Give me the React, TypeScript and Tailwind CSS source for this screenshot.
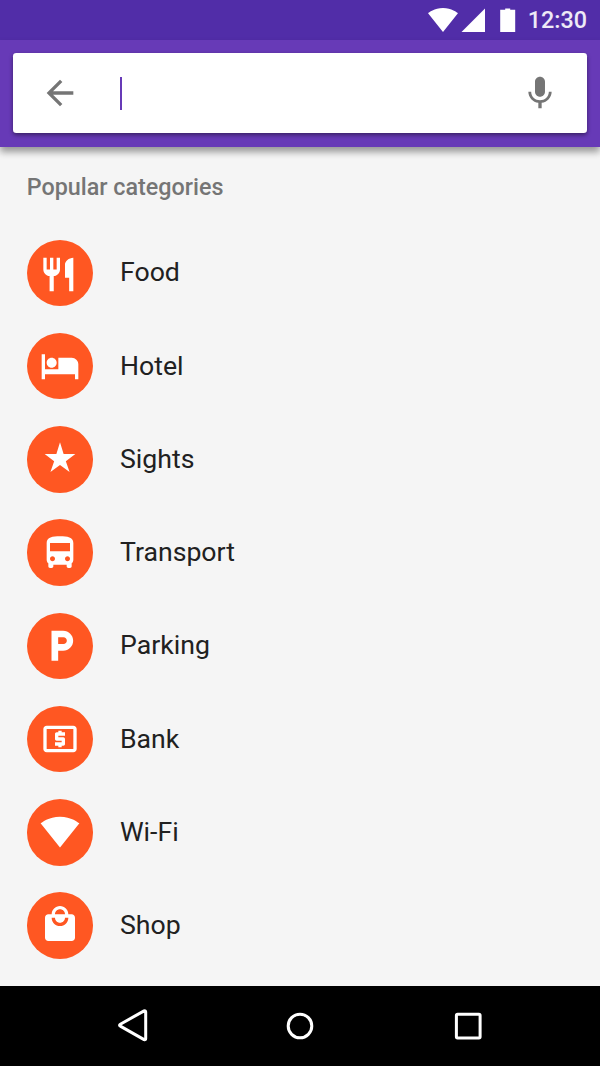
import type { ReactNode } from "react";

type Category = { label: string; icon: ReactNode };

const WIFI =
  "M12.01 21.49L23.64 7c-.45-.34-4.93-4-11.64-4C5.28 3 .81 6.66.36 7l11.63 14.49.01.01.01-.01z";

const categories: Category[] = [
  {
    label: "Food",
    icon: (
      <path
        transform="translate(-1 0.9)"
        d="M11 9H9V2H7v7H5V2H3v7c0 2.12 1.66 3.84 3.75 3.97V22h2.5v-9.03C11.34 12.84 13 11.12 13 9V2h-2v7zm5-3v8h2.5v8H21V2c-2.76 0-5 2.24-5 4z"
      />
    ),
  },
  {
    label: "Hotel",
    icon: (
      <path d="M7 13c1.66 0 3-1.34 3-3S8.66 7 7 7s-3 1.34-3 3 1.34 3 3 3zm12-6h-8v7H3V5H1v15h2v-3h18v3h2v-9c0-2.21-1.79-4-4-4z" />
    ),
  },
  {
    label: "Sights",
    icon: (
      <path d="M12 2L14.17 9.05L21.2 9.05L15.5 13.3L17.75 19.8L12 15.65L6.25 19.8L8.5 13.3L2.8 9.05L9.83 9.05z" />
    ),
  },
  {
    label: "Transport",
    icon: (
      <path d="M4 16c0 .88.39 1.67 1 2.22V20c0 .55.45 1 1 1h1c.55 0 1-.45 1-1v-1h8v1c0 .55.45 1 1 1h1c.55 0 1-.45 1-1v-1.78c.61-.55 1-1.34 1-2.22V6c0-3.5-3.58-4-8-4s-8 .5-8 4v10zm3.5 1c-.83 0-1.5-.67-1.5-1.5S6.67 14 7.5 14s1.5.67 1.5 1.5S8.33 17 7.5 17zm9 0c-.83 0-1.5-.67-1.5-1.5s.67-1.5 1.5-1.5 1.5.67 1.5 1.5-.67 1.5-1.5 1.5zm1.5-6H6V6h12v5z" />
    ),
  },
  {
    label: "Parking",
    icon: (
      <path
        transform="translate(0.9 -0.2)"
        d="M13 3H6v18h4v-6h3c3.31 0 6-2.69 6-6s-2.69-6-6-6zm.2 8H10V7h3.2c1.1 0 2 .9 2 2s-.9 2-2 2z"
      />
    ),
  },
  {
    label: "Bank",
    icon: (
      <path d="M11 17h2v-1h1c.55 0 1-.45 1-1v-3c0-.55-.45-1-1-1h-3v-1h4V8h-2V7h-2v1h-1c-.55 0-1 .45-1 1v3c0 .55.45 1 1 1h3v1H9v2h2v1zm9-13H4c-1.11 0-1.99.89-1.99 2L2 18c0 1.11.89 2 2 2h16c1.11 0 2-.89 2-2V6c0-1.11-.89-2-2-2zm0 14H4V6h16v12z" />
    ),
  },
  { label: "Wi-Fi", icon: <path transform="translate(0 -0.2)" d={WIFI} /> },
  {
    label: "Shop",
    icon: (
      <path
        transform="translate(0 -1)"
        d="M19 6h-2c0-2.76-2.24-5-5-5S7 3.24 7 6H5c-1.1 0-1.99.9-1.99 2L3 20c0 1.1.9 2 2 2h14c1.1 0 2-.9 2-2V8c0-1.1-.9-2-2-2zm-7-3c1.66 0 3 1.34 3 3H9c0-1.66 1.34-3 3-3zm0 10c-2.76 0-5-2.24-5-5h2c0 1.66 1.34 3 3 3s3-1.34 3-3h2c0 2.76-2.24 5-5 5z"
      />
    ),
  },
];

function StatusBar() {
  return (
    <div className="flex h-10 items-center justify-end bg-[#512da8] pr-[13px] text-white">
      <svg className="mr-[3px] h-6 w-[30px]" viewBox="0.3 3 23.4 18.5" fill="currentColor" preserveAspectRatio="none">
        <path d={WIFI} />
      </svg>
      <svg className="mr-[15px] h-6 w-6" viewBox="0 0 24 24" fill="currentColor">
        <path d="M0.5 24L24 0.5V24z" />
      </svg>
      <svg className="mr-3 h-6 w-4" viewBox="0 0 16 24" fill="currentColor">
        <path d="M0.2 1.7h5V0.4h5V1.7h5V24h-15z" />
      </svg>
      <span className="pt-0.5 text-[23.33px] leading-none font-medium text-white/90">12:30</span>
    </div>
  );
}

function SearchHeader() {
  return (
    <header className="relative h-[106.67px] bg-[#673ab7] p-[13.33px] shadow-[0_5px_7px_rgba(0,0,0,0.38)]">
      <div className="flex h-20 items-center rounded-[3.33px] bg-white px-[26.67px] text-[#757575] shadow-[0_2px_4px_rgba(0,0,0,0.45)]">
        <svg className="size-10 shrink-0" viewBox="0 0 24 24" fill="currentColor">
          <path d="M20 11H7.83l5.59-5.59L12 4l-8 8 8 8 1.41-1.41L7.83 13H20v-2z" />
        </svg>
        <div className="ml-10 h-[33px] w-0.5 bg-[#673ab7]" />
        <svg className="ml-auto size-10 shrink-0" viewBox="0 0 24 24" fill="currentColor">
          <path
            transform="translate(0 0.2)"
            d="M12 14c1.66 0 2.99-1.34 2.99-3L15 5c0-1.66-1.34-3-3-3S9 3.34 9 5v6c0 1.66 1.34 3 3 3zm5.3-3c0 3-2.54 5.1-5.3 5.1S6.7 14 6.7 11H5c0 3.41 2.72 6.23 6 6.72V21h2v-3.28c3.28-.48 6-3.3 6-6.72h-1.7z"
          />
        </svg>
      </div>
    </header>
  );
}

function CategoryRow({ label, icon }: Category) {
  return (
    <li className="flex h-[93.25px] items-center">
      <div className="flex size-[66.67px] shrink-0 items-center justify-center rounded-full bg-[#ff5722]">
        <svg className="size-10 overflow-visible text-white" viewBox="0 0 24 24" fill="currentColor" fillRule="evenodd">
          {icon}
        </svg>
      </div>
      <span className="ml-[26.67px] pb-px text-[26.67px] leading-8 text-[#212121]">{label}</span>
    </li>
  );
}

function NavigationBar() {
  return (
    <nav className="flex h-20 items-center justify-center gap-32 bg-black text-white">
      <svg className="size-10" viewBox="0 0 40 40" fill="none" stroke="currentColor" strokeWidth="3" strokeLinejoin="round">
        <path d="M8.3 18.2L32.1 4.9Q33.7 4.3 33.7 6V32.4Q33.7 34.2 32.1 33.6L8.3 20.1Q6.8 19.1 8.3 18.2z" />
      </svg>
      <svg className="size-10" viewBox="0 0 40 40" fill="none" stroke="currentColor" strokeWidth="3">
        <circle cx="20" cy="20" r="11.8" />
      </svg>
      <svg className="size-10" viewBox="0 0 40 40" fill="none" stroke="currentColor" strokeWidth="3">
        <rect x="8.4" y="8.2" width="23.7" height="23.7" rx="1.2" />
      </svg>
    </nav>
  );
}

export default function App() {
  return (
    <div className="flex h-[1066px] w-[600px] flex-col overflow-hidden bg-[#f5f5f5] font-['Roboto',sans-serif]">
      <StatusBar />
      <SearchHeader />
      <main className="flex-1 px-[26.67px]">
        <h1 className="flex h-[79.6px] items-center pt-0.5 text-[23.33px] font-medium text-[#757575]">
          Popular categories
        </h1>
        <ul>
          {categories.map((category) => (
            <CategoryRow key={category.label} {...category} />
          ))}
        </ul>
      </main>
      <NavigationBar />
    </div>
  );
}
